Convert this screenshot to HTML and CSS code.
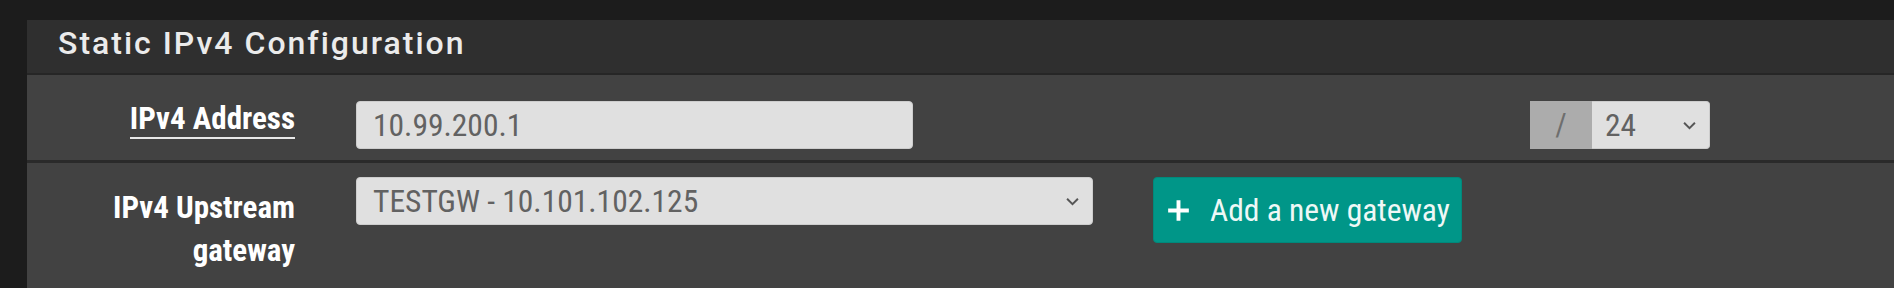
FILE: index.html
```html
<!DOCTYPE html>
<html lang="en">
<head>
  <meta charset="UTF-8" />
  <title>Static IPv4 Configuration</title>
  <link rel="stylesheet" href="styles.css">
</head>
<body>
  <div class="panel">
    <div class="panel-heading">
      <h2 class="panel-title">Static IPv4 Configuration</h2>
    </div>
    <div class="panel-body">
      <div class="form-group first">
        <label class="control-label"><span class="required">IPv4 Address</span></label>
        <div class="col-address">
          <input type="text" class="form-control" value="10.99.200.1" />
        </div>
        <div class="input-group">
          <span class="addon">/</span>
          <div class="select-wrap mask">
            <select class="form-control">
              <option>24</option>
            </select>
            <svg class="chevron" viewBox="0 0 12 8"><path d="M1 1.5 6 6.5 11 1.5" /></svg>
          </div>
        </div>
      </div>

      <div class="form-group">
        <label class="control-label">IPv4 Upstream<br>gateway</label>
        <div class="col-gateway">
          <div class="select-wrap">
            <select class="form-control">
              <option>TESTGW - 10.101.102.125</option>
            </select>
            <svg class="chevron" viewBox="0 0 12 8"><path d="M1 1.5 6 6.5 11 1.5" /></svg>
          </div>
        </div>
        <button class="btn-success">
          <svg class="plus" viewBox="0 0 20 20"><path d="M10 1v18M1 10h18" /></svg>
          Add a new gateway
        </button>
      </div>
    </div>
  </div>
</body>
</html>
```

FILE: styles.css
```css
* {
  box-sizing: border-box;
}

body {
  margin: 0;
  padding: 20px 0 0 27px;
  background: #1c1c1c;
  font-family: "Roboto Condensed", "Liberation Sans Narrow", Roboto, sans-serif;
  color: #fff;
  overflow: hidden;
}

.panel {
  background: #424242;
  height: 268px;
}

.panel-heading {
  background: #2f2f2f;
  height: 55px;
  border-bottom: 2px solid #262626;
  padding-left: 31px;
}

.panel-title {
  margin: 0;
  font-family: Roboto, sans-serif;
  font-weight: 500;
  font-size: 32px;
  letter-spacing: 2px;
  line-height: 47px;
  color: #ebebeb;
}

.form-group {
  display: flex;
  align-items: flex-start;
  padding: 14px 0 0;
}

.form-group.first {
  padding: 26px 0 11px;
  border-bottom: 3px solid #2a2a2a;
}

.control-label {
  width: 268px;
  margin-right: 61px;
  margin-top: 9px;
  text-align: right;
  font-size: 31px;
  font-weight: 700;
  line-height: 43px;
}

.first .control-label {
  margin-top: -4px;
}

.control-label .required {
  border-bottom: 2px solid #e8e8e8;
}

.form-control {
  display: block;
  width: 100%;
  height: 48px;
  padding: 0 16px;
  background: #e0e0e0;
  border: 1px solid #cdcdcd;
  border-radius: 4px;
  font-family: inherit;
  font-size: 31.5px;
  color: #626262;
  appearance: none;
  outline: none;
}

.col-address {
  width: 557px;
}

.input-group {
  display: flex;
  margin-left: 617px;
  width: 180px;
}

.addon {
  width: 62px;
  height: 48px;
  background: #acacac;
  color: #6e6e6e;
  font-size: 31px;
  line-height: 48px;
  text-align: center;
}

.select-wrap {
  position: relative;
  flex: 1;
}

.select-wrap.mask .form-control {
  border-radius: 0 4px 4px 0;
  border-left: none;
  padding-left: 13px;
}

.chevron {
  position: absolute;
  right: 14px;
  top: 20px;
  width: 13px;
  height: 9px;
  fill: none;
  stroke: #555;
  stroke-width: 1.8;
}

.col-gateway {
  width: 737px;
  margin-right: 60px;
}

.btn-success {
  display: flex;
  align-items: center;
  gap: 20px;
  height: 66px;
  padding: 0 11px 0 13px;
  background: #009688;
  border: 1px solid #00897b;
  border-radius: 4px;
  color: #eef8f6;
  font-family: inherit;
  font-size: 31.5px;
}

.plus {
  width: 23px;
  height: 23px;
  fill: none;
  stroke: #fff;
  stroke-width: 3.4;
}
```
